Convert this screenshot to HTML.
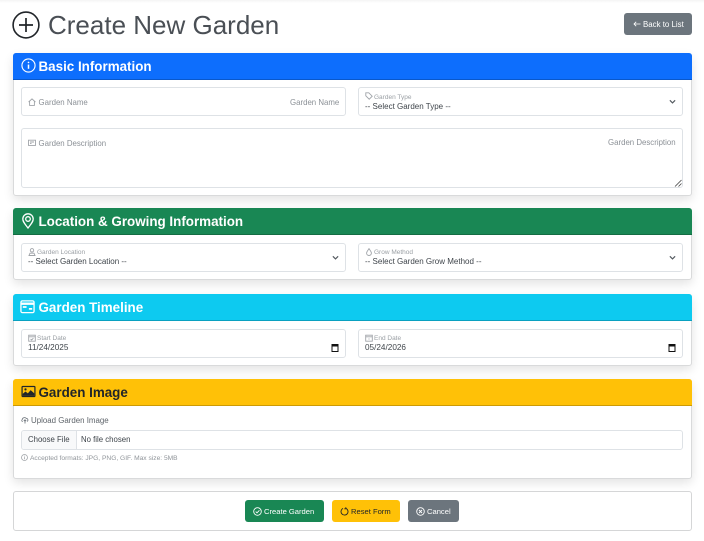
<!DOCTYPE html>
<html lang="en">
<head>
<meta charset="utf-8">
<title>Create New Garden</title>
<style>
html,body{margin:0;padding:0;width:704px;height:541px;overflow:hidden;background:#fff;font-family:"Liberation Sans",sans-serif;color:#212529}
body{position:relative}
.a{position:absolute;white-space:nowrap}
#top{left:0;top:0;width:704px;height:3px;background:linear-gradient(#f4f4f4,#fff)}
.card{position:absolute;left:12.5px;width:679px;background:#fff;border:1px solid #d9dadb;border-radius:3px;box-sizing:border-box;box-shadow:0 4px 10px rgba(0,0,0,.11)}
.hd{position:absolute;left:-1px;top:-1px;width:679px;height:27px;border-radius:3px 3px 0 0;box-sizing:border-box;border-bottom:1px solid rgba(0,0,0,.2)}
.ttl{position:absolute;top:5px;left:26px;font-size:13.4px;line-height:17px;font-weight:700;white-space:nowrap}
.hd svg{position:absolute;left:8px;top:5px;width:15px;height:15px}
.f{position:absolute;border:1px solid #dee2e6;border-radius:3px;box-sizing:border-box;background:#fff}
.lb{position:absolute;font-size:7.85px;line-height:10px;color:#8b9096;white-space:nowrap}
.sm{font-size:6.5px;line-height:9px;color:#9a9fa4}
.v{position:absolute;font-size:8px;line-height:10px;color:#3f454b;white-space:nowrap}
.ic{position:absolute;width:8px;height:8px;fill:none;stroke:#a0a4a9;stroke-width:.9}
.chev{position:absolute;width:7px;height:7px;fill:none;stroke:#555b61;stroke-width:1.4}
.cal{position:absolute;width:10px;height:10px}
.btn{position:absolute;top:500px;height:22px;border-radius:3px;font-size:7.6px;line-height:22px;font-weight:400;white-space:nowrap;box-sizing:border-box}
.btn svg{position:absolute;left:8px;top:6.5px;width:9px;height:9px;fill:none;stroke:currentColor;stroke-width:.9}
.btn span{position:absolute;top:.5px}
</style>
</head>
<body>
<div class="a" id="top"></div>

<svg class="a" style="left:12px;top:11px;width:28px;height:28px" viewBox="0 0 28 28" fill="none" stroke="#212529" stroke-width="1.6">
<circle cx="14" cy="14" r="12.9"/><path d="M14 7v14M7 14h14" stroke-width="1.7"/></svg>
<div class="a" style="left:48px;top:9px;font-size:26px;line-height:32px;color:#4a4f55;font-weight:400;letter-spacing:0">Create New Garden</div>

<div class="a" style="left:624px;top:13px;width:68px;height:22px;background:#6c757d;border-radius:3px;color:#fff;font-size:7.9px;line-height:22px">
<svg style="position:absolute;left:9px;top:7px;width:8px;height:8px" viewBox="0 0 8 8" fill="none" stroke="#fff" stroke-width=".8"><path d="M7.5 4H1M3.2 1.8 1 4l2.2 2.200"/></svg>
<span style="position:absolute;left:19px;top:.5px">Back to List</span></div>

<!-- Basic Information -->
<div class="card" style="top:53px;height:143px">
  <div class="hd" style="background:#0d6efd;color:#fff">
    <svg viewBox="0 0 16 16" fill="none" stroke="#fff" stroke-width="1.2"><circle cx="8" cy="8" r="7"/><path d="M8 7v4.500" stroke-width="1.600"/><circle cx="8" cy="4.700" r=".9" fill="#fff" stroke="none"/></svg>
    <div class="ttl">Basic Information</div>
  </div>
</div>
<div class="f" style="left:21px;top:87px;width:325px;height:29px"></div>
<svg class="ic" style="left:28px;top:98px" viewBox="0 0 8 8"><path d="M.6 4 4 .9 7.400 4M1.600 3.400v4h4.800v-4"/></svg>
<div class="lb" style="left:38.5px;top:97.500px">Garden Name</div>
<div class="lb" style="left:290px;top:97.500px">Garden Name</div>

<div class="f" style="left:358px;top:87px;width:325px;height:29px"></div>
<svg class="ic" style="left:365px;top:92px" viewBox="0 0 8 8"><path d="M.8.8h3l3.400 3.400-3 3L.8 3.800z"/></svg>
<div class="lb sm" style="left:374px;top:92.500px">Garden Type</div>
<div class="v" style="left:365px;top:101.500px">-- Select Garden Type --</div>
<svg class="chev" style="left:669px;top:98px" viewBox="0 0 8 8"><path d="M1 2.600 4 5.600l3-3"/></svg>

<div class="f" style="left:21px;top:128px;width:662px;height:60px"></div>
<svg class="ic" style="left:28px;top:139px" viewBox="0 0 8 8"><path d="M.5 1.200h7v5.200h-7zM2 3h4M2 4.600h1.500"/></svg>
<div class="lb" style="left:38.5px;top:138.500px">Garden Description</div>
<div class="lb" style="left:608px;top:137.500px">Garden Description</div>
<svg class="a" style="left:674px;top:179px;width:8px;height:8px" viewBox="0 0 8 8" fill="none" stroke="#444" stroke-width=".8"><path d="M1 7.500 7.500 1M4.500 7.500l3-3"/></svg>

<!-- Location -->
<div class="card" style="top:208px;height:72px">
  <div class="hd" style="background:#198754;color:#fff;height:27px">
    <svg viewBox="0 0 16 16" fill="none" stroke="#fff" stroke-width="1.300" style="left:7px;top:5px;width:16px;height:16px"><path d="M8 15C5 11 2.800 8.800 2.800 6a5.200 5.200 0 0 1 10.400 0C13.200 8.800 11 11 8 15z"/><circle cx="8" cy="6" r="2.300"/></svg>
    <div class="ttl" style="left:26px;top:5px">Location &amp; Growing Information</div>
  </div>
</div>
<div class="f" style="left:21px;top:243px;width:325px;height:29px"></div>
<svg class="ic" style="left:28px;top:248px" viewBox="0 0 8 8"><circle cx="4" cy="2.300" r="1.700"/><path d="M1 7.500 2 5.200h4l1 2.300z"/></svg>
<div class="lb sm" style="left:37px;top:248px">Garden Location</div>
<div class="v" style="left:28px;top:257px">-- Select Garden Location --</div>
<svg class="chev" style="left:332px;top:254px" viewBox="0 0 8 8"><path d="M1 2.600 4 5.600l3-3"/></svg>

<div class="f" style="left:358px;top:243px;width:325px;height:29px"></div>
<svg class="ic" style="left:365px;top:248px" viewBox="0 0 8 8"><path d="M4 .6C3 2.400 1.600 3.600 1.600 5.100a2.400 2.400 0 0 0 4.800 0C6.400 3.600 5 2.400 4 .6z"/></svg>
<div class="lb sm" style="left:374px;top:248px">Grow Method</div>
<div class="v" style="left:365px;top:257px">-- Select Garden Grow Method --</div>
<svg class="chev" style="left:669px;top:254px" viewBox="0 0 8 8"><path d="M1 2.600 4 5.600l3-3"/></svg>

<!-- Timeline -->
<div class="card" style="top:294px;height:72px">
  <div class="hd" style="background:#0dcaf0;color:#fff;height:27px">
    <svg viewBox="0 0 16 16" fill="none" stroke="#fff" stroke-width="1.400" style="left:7.500px;top:5px;width:15px;height:15px"><rect x="1" y="2" width="14" height="12.500" rx="1.500"/><path d="M1 5h14" stroke-width="2.500"/><path d="M3 8.500h4M9.500 10.500H13" stroke-width="1.800"/></svg>
    <div class="ttl" style="top:5px">Garden Timeline</div>
  </div>
</div>
<div class="f" style="left:21px;top:329px;width:325px;height:29px"></div>
<svg class="ic" style="left:28px;top:334px" viewBox="0 0 8 8"><path d="M.7 1.200h6.600v6H.7zM.7 2.800h6.600M2.600 5l1 1 1.800-1.800"/></svg>
<div class="lb sm" style="left:37px;top:334px">Start Date</div>
<div class="v" style="left:28px;top:342.500px;font-size:8.200px">11/24/2025</div>
<svg class="cal" style="left:330px;top:343px" viewBox="0 0 10 10"><path fill="#111" d="M1.500 1H8.500V9H1.500zm1 2.500v4.500h5V3.500z"/></svg>

<div class="f" style="left:358px;top:329px;width:325px;height:29px"></div>
<svg class="ic" style="left:365px;top:334px" viewBox="0 0 8 8"><path d="M.7 1.200h6.600v6H.7zM.7 2.800h6.600M3.500 5h1"/></svg>
<div class="lb sm" style="left:374px;top:334px">End Date</div>
<div class="v" style="left:365px;top:342.500px;font-size:8.200px">05/24/2026</div>
<svg class="cal" style="left:667px;top:343px" viewBox="0 0 10 10"><path fill="#111" d="M1.500 1H8.500V9H1.500zm1 2.500v4.500h5V3.500z"/></svg>

<!-- Image -->
<div class="card" style="top:379px;height:100px">
  <div class="hd" style="background:#ffc107;color:#212529;height:27px">
    <svg viewBox="0 0 16 16" style="left:8px;top:5px;width:15px;height:15px"><rect x=".5" y="2" width="15" height="12" rx="1.500" fill="#212529"/><rect x="1.800" y="3.300" width="12.400" height="9.400" fill="#ffc107"/><path d="M1.800 12.700V10.500l3-2.500 2.500 2 3-3.500 3.900 3.500v2.700z" fill="#212529"/><circle cx="4.800" cy="5.700" r="1.200" fill="#212529"/></svg>
    <div class="ttl" style="top:5px">Garden Image</div>
  </div>
</div>
<svg class="ic" style="left:21px;top:416px;stroke:#7a8087" viewBox="0 0 8 8"><path d="M1.800 5.500C.6 5.500.4 4 1.300 3.500 1.500 1.700 4 .9 5.200 2.400c1.500-.2 2.500 1.800.9 3.100M4 7.500V4M2.800 5 4 3.800 5.200 5"/></svg>
<div class="lb" style="left:31px;top:416px;color:#5f656b;font-size:7.900px">Upload Garden Image</div>
<div class="f" style="left:21px;top:430px;width:662px;height:20px;overflow:hidden">
  <div style="position:absolute;left:0;top:0;width:53.500px;height:18px;background:#f8f9fa;border-right:1px solid #dee2e6"></div>
  <div class="v" style="left:6px;top:4px;color:#3f454b;font-size:7.800px">Choose File</div>
  <div class="v" style="left:59px;top:4px;color:#3f454b;font-size:7.800px">No file chosen</div>
</div>
<svg class="ic" style="left:21px;top:453.500px;width:7px;height:7px" viewBox="0 0 8 8"><circle cx="4" cy="4" r="3.400"/><path d="M4 3.500v2.500M4 2v.8"/></svg>
<div class="lb sm" style="left:30px;top:453.500px;font-size:6.650px;color:#90959a">Accepted formats: JPG, PNG, GIF. Max size: 5MB</div>

<!-- Actions -->
<div class="card" style="top:491px;height:40px;box-shadow:none;border-color:#d5d6d7"></div>
<div class="btn" style="left:245px;width:79px;background:#198754;color:#fff">
  <svg viewBox="0 0 9 9"><circle cx="4.500" cy="4.500" r="3.800"/><path d="m2.700 4.600 1.300 1.300 2.400-2.600"/></svg><span style="left:19px">Create Garden</span></div>
<div class="btn" style="left:332px;width:68px;background:#ffc107;color:#212529">
  <svg viewBox="0 0 9 9"><path d="M5.800 1.300A3.500 3.500 0 1 1 3 1.400M5.800 .3v1.500H4.300" /></svg><span style="left:19px">Reset Form</span></div>
<div class="btn" style="left:408px;width:51px;background:#6c757d;color:#fff">
  <svg viewBox="0 0 9 9"><circle cx="4.500" cy="4.500" r="3.800"/><path d="m3 3 3 3M6 3 3 6"/></svg><span style="left:19px">Cancel</span></div>
</body>
</html>
